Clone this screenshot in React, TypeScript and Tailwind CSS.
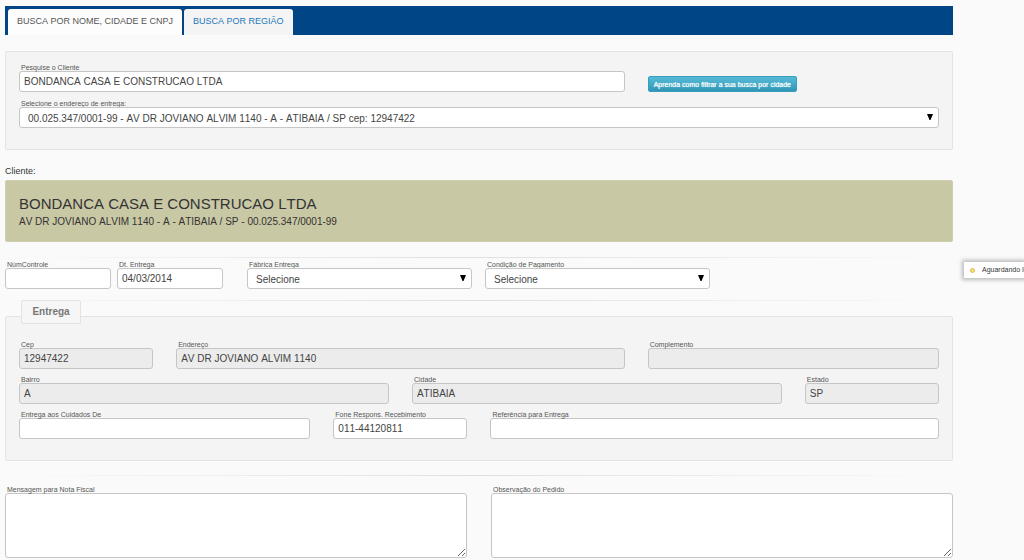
import { useState } from "react";
import type { ReactNode } from "react";

const box = "block w-full rounded-[3px] border border-[#c6c6c6] text-[10px] text-[#444]";

function Field({ id, label, className = "", children }: { id: string; label: string; className?: string; children: ReactNode }) {
  return (
    <div className={className}>
      <label htmlFor={id} className="block whitespace-nowrap pl-[2px] text-[7px] leading-[7px] text-[#555]">{label}</label>
      {children}
    </div>
  );
}

function TextField({ id, label, value = "", locked = false, className = "" }: { id: string; label: string; value?: string; locked?: boolean; className?: string }) {
  const [text, setText] = useState(value);
  return (
    <Field id={id} label={label} className={className}>
      <input id={id} type="text" value={text} readOnly={locked} onChange={(e) => setText(e.target.value)}
             className={`${box} h-[21px] px-1 ${locked ? "bg-[#ececec]" : "bg-white"}`} />
    </Field>
  );
}

function SelectField({ id, label, option, className = "" }: { id: string; label: string; option: string; className?: string }) {
  return (
    <Field id={id} label={label} className={className}>
      <div className="relative">
        <select id={id} className={`${box} h-[21px] appearance-none bg-white pt-px pl-2 pr-5`}>
          <option>{option}</option>
        </select>
        <svg viewBox="0 0 6 6" className="pointer-events-none absolute right-[6px] top-[7px] h-[6px] w-[6px]" aria-hidden="true">
          <path d="M0 0H6L3.5 6H2.5Z" fill="#000" />
        </svg>
      </div>
    </Field>
  );
}

function Divider() {
  return <hr className="h-px border-0 bg-linear-to-r from-transparent via-[#e0e0e0] to-transparent" />;
}

export default function App() {
  const [tab, setTab] = useState("nome");

  return (
    <div className="relative min-h-screen overflow-hidden bg-[#fafafa] pt-[6px] pr-[71px] pl-[5px] font-['Liberation_Sans',Arial,sans-serif] text-[#333] [font-kerning:none]">
      <nav className="flex h-[29px] items-end gap-[2px] bg-[#004586] pl-[3px] text-[9px]">
        <button type="button" onClick={() => setTab("nome")}
                className={`h-[26px] rounded-t-[3px] px-[9px] ${tab === "nome" ? "bg-[#fdfdfd] text-[#555]" : "bg-[#f4f4f4] text-[#1c78bd]"}`}>
          BUSCA POR NOME, CIDADE E CNPJ
        </button>
        <button type="button" onClick={() => setTab("regiao")}
                className={`h-[26px] rounded-t-[3px] px-[9px] ${tab === "regiao" ? "bg-[#fdfdfd] text-[#555]" : "bg-[#f4f4f4] text-[#1c78bd]"}`}>
          BUSCA POR REGIÃO
        </button>
      </nav>

      <section className="mt-4 grid grid-cols-12 gap-x-[23px] gap-y-2 rounded-[2px] border border-[#e3e3e3] bg-[#f4f4f4] px-[13px] pt-3 pb-[21px]">
        <TextField id="cliente" label="Pesquise o Cliente" value="BONDANCA CASA E CONSTRUCAO LTDA" className="col-span-8" />
        <div className="col-span-4 flex items-end">
          <button type="button"
                  className="h-4 whitespace-nowrap rounded-[2px] border border-[#3a9dbb] bg-linear-to-b from-[#55bbd8] to-[#2f97b7] px-[5px] text-[7px] leading-[7px] text-white text-shadow-[0_0_1px_#fff]">
            Aprenda como filtrar a sua busca por cidade
          </button>
        </div>
        <SelectField id="endereco-entrega" label="Selecione o endereço de entrega:" className="col-span-12"
                     option="00.025.347/0001-99 - AV DR JOVIANO ALVIM 1140 - A - ATIBAIA / SP cep: 12947422" />
      </section>

      <p className="mt-[15px] text-[9px] leading-3">Cliente:</p>
      <section className="mt-[3px] h-[62px] rounded-[2px] border border-[#d0ceb0] bg-[#c9c8a4] px-[13px] pt-[13px]">
        <h1 className="text-[15px] leading-5">BONDANCA CASA E CONSTRUCAO LTDA</h1>
        <p className="text-[10px] leading-4">AV DR JOVIANO ALVIM 1140 - A - ATIBAIA / SP - 00.025.347/0001-99</p>
      </section>

      <div className="mt-[15px]"><Divider /></div>
      <div className="mt-[3px] flex">
        <TextField id="num-controle" label="NúmControle" className="w-[106px]" />
        <TextField id="dt-entrega" label="Dt. Entrega" value="04/03/2014" className="ml-[6px] w-[106px]" />
        <SelectField id="fabrica" label="Fábrica Entrega" option="Selecione" className="ml-6 w-[225px]" />
        <SelectField id="pagamento" label="Condição de Pagamento" option="Selecione" className="ml-[13px] w-[225px]" />
      </div>
      <div className="mt-[11px]"><Divider /></div>

      <section className="mt-[15px] rounded-[2px] border border-[#e3e3e3] bg-[#f4f4f4] px-[13px] pb-[21px]">
        <h2 className="-mt-[17px] ml-[2px] h-6 w-[60px] rounded-[2px] border border-[#e3e3e3] bg-[#f6f6f6] text-center text-[10px] leading-[22px] font-bold text-[#777]">
          Entrega
        </h2>
        <div className="mt-[17px] grid grid-cols-12 gap-x-[23px] gap-y-[7px]">
          <TextField id="cep" label="Cep" value="12947422" locked className="col-span-2" />
          <TextField id="endereco" label="Endereço" value="AV DR JOVIANO ALVIM 1140" locked className="col-span-6" />
          <TextField id="complemento" label="Complemento" locked className="col-span-4" />
          <TextField id="bairro" label="Bairro" value="A" locked className="col-span-5" />
          <TextField id="cidade" label="Cidade" value="ATIBAIA" locked className="col-span-5" />
          <TextField id="estado" label="Estado" value="SP" locked className="col-span-2" />
          <TextField id="cuidados" label="Entrega aos Cuidados De" className="col-span-4" />
          <TextField id="fone" label="Fone Respons. Recebimento" value="011-44120811" className="col-span-2" />
          <TextField id="referencia" label="Referência para Entrega" className="col-span-6" />
        </div>
      </section>

      <div className="mt-[14px]"><Divider /></div>
      <div className="mt-[10px] grid grid-cols-2 gap-x-6">
        <Field id="mensagem" label="Mensagem para Nota Fiscal">
          <textarea id="mensagem" className={`${box} h-[65px] resize bg-white p-1`} />
        </Field>
        <Field id="observacao" label="Observação do Pedido">
          <textarea id="observacao" className={`${box} h-[65px] resize bg-white p-1`} />
        </Field>
      </div>

      {/* status box, tucked against the right edge */}
      <div role="status" className="absolute top-[262px] right-0 flex h-4 w-[60px] items-center gap-[7px] bg-white pl-[6px] text-[7px] whitespace-nowrap shadow-[0_0_4px_2px_rgba(0,0,0,0.25)]">
        <svg viewBox="0 0 6 6" className="h-[5px] w-[5px] shrink-0" aria-hidden="true">
          <circle cx="3" cy="3" r="2.4" fill="#f6e27a" stroke="#d9a932" />
        </svg>
        <span>Aguardando I</span>
      </div>
    </div>
  );
}
